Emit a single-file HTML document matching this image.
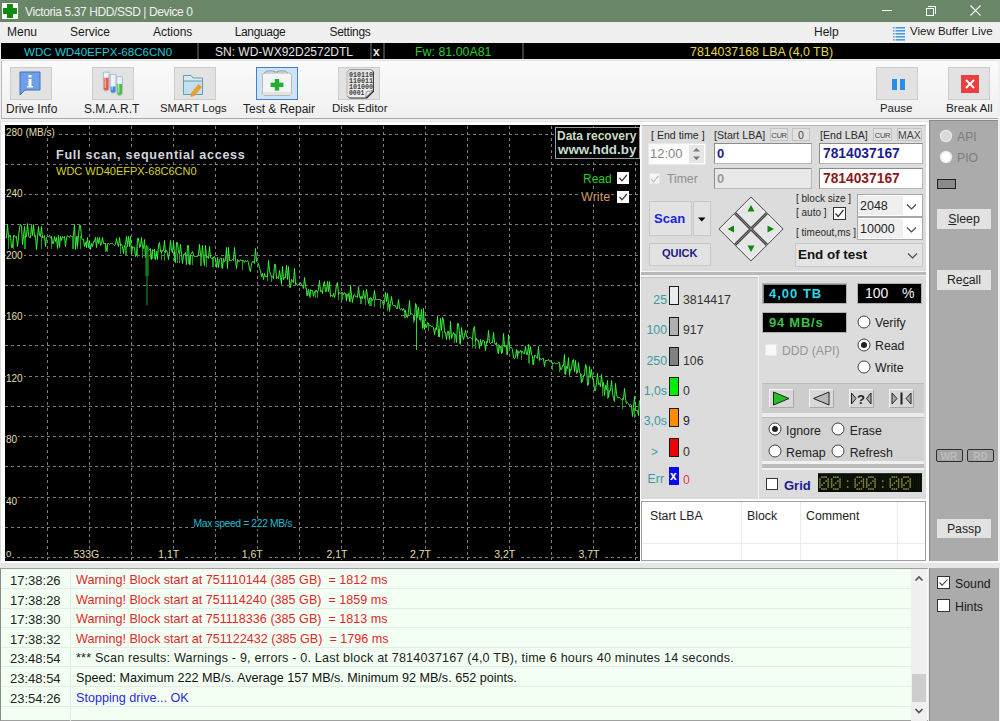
<!DOCTYPE html>
<html><head><meta charset="utf-8">
<style>
*{margin:0;padding:0;box-sizing:border-box}
html,body{width:1000px;height:721px;overflow:hidden;background:#f0f0f0;font-family:"Liberation Sans",sans-serif;font-size:12px;color:#000;position:relative}
.a{position:absolute}
.t{position:absolute;white-space:pre;line-height:1}
svg{position:absolute;left:0;top:0}
</style></head><body>

<div class="a" style="left:0px;top:0px;width:1000px;height:22px;background:#6a8669"></div>
<div class="a" style="left:2px;top:3px;width:16px;height:16px;background:#fff"></div>
<div class="a" style="left:7px;top:4px;width:6px;height:14px;background:#118a11"></div>
<div class="a" style="left:3px;top:8px;width:14px;height:6px;background:#118a11"></div>
<div class="t" style="left:25px;top:5.5px;font-size:12px;color:#eef2ee;font-weight:400;letter-spacing:-0.4px">Victoria 5.37 HDD/SSD | Device 0</div>
<div class="a" style="left:882px;top:10px;width:10px;height:1px;background:#fff"></div>
<div class="a" style="left:926px;top:8px;width:8px;height:8px;border:1px solid #fff"></div>
<div class="a" style="left:928px;top:6px;width:8px;height:8px;border-top:1px solid #fff;border-right:1px solid #fff"></div>
<svg width="1000" height="22" style="left:0;top:0"><path d="M970.5 5.5 L980.5 15.5 M980.5 5.5 L970.5 15.5" stroke="#fff" stroke-width="1.1"/></svg>
<div class="a" style="left:0px;top:22px;width:1000px;height:21px;background:#f0f0f0"></div>
<div class="t" style="left:7px;top:26px;font-size:12px;color:#1a1a1a;font-weight:400;letter-spacing:0px">Menu</div>
<div class="t" style="left:70px;top:26px;font-size:12px;color:#1a1a1a;font-weight:400;letter-spacing:0px">Service</div>
<div class="t" style="left:153px;top:26px;font-size:12px;color:#1a1a1a;font-weight:400;letter-spacing:0px">Actions</div>
<div class="t" style="left:234.7px;top:26px;font-size:12px;color:#1a1a1a;font-weight:400;letter-spacing:-0.35px">Language</div>
<div class="t" style="left:329.5px;top:26px;font-size:12px;color:#1a1a1a;font-weight:400;letter-spacing:-0.3px">Settings</div>
<div class="t" style="left:814px;top:26px;font-size:12px;color:#1a1a1a;font-weight:400;letter-spacing:0px">Help</div>
<div class="t" style="left:910px;top:26px;font-size:11.5px;color:#1a1a1a;font-weight:400;">View Buffer Live</div>
<svg width="16" height="16" style="left:892px;top:25px"><rect x="1" y="2" width="1.5" height="1.6" fill="#5aa8ec"/><rect x="3.5" y="2" width="9.5" height="1.6" fill="#4a9ce8"/><rect x="1" y="5" width="1.5" height="1.6" fill="#5aa8ec"/><rect x="3.5" y="5" width="9.5" height="1.6" fill="#4a9ce8"/><rect x="1" y="8" width="1.5" height="1.6" fill="#5aa8ec"/><rect x="3.5" y="8" width="9.5" height="1.6" fill="#4a9ce8"/><rect x="1" y="11" width="1.5" height="1.6" fill="#5aa8ec"/><rect x="3.5" y="11" width="9.5" height="1.6" fill="#4a9ce8"/><rect x="1" y="14" width="1.5" height="1.6" fill="#5aa8ec"/><rect x="3.5" y="14" width="9.5" height="1.6" fill="#4a9ce8"/></svg>
<div class="a" style="left:1px;top:43px;width:999px;height:16px;background:#000"></div>
<div class="a" style="left:197px;top:43px;width:2px;height:16px;background:#3c3c3c"></div>
<div class="a" style="left:370px;top:43px;width:2px;height:16px;background:#3c3c3c"></div>
<div class="a" style="left:383px;top:43px;width:2px;height:16px;background:#3c3c3c"></div>
<div class="a" style="left:522px;top:43px;width:2px;height:16px;background:#3c3c3c"></div>
<div class="t" style="left:24px;top:46px;font-size:11.6px;color:#20c8d4;font-weight:400;">WDC WD40EFPX-68C6CN0</div>
<div class="t" style="left:215px;top:46px;font-size:12px;color:#e4e4e4;font-weight:400;">SN: WD-WX92D2572DTL</div>
<div class="t" style="left:373px;top:45.5px;font-size:12px;color:#e4e4e4;font-weight:700;">x</div>
<div class="t" style="left:415px;top:46px;font-size:12.4px;color:#28d028;font-weight:400;">Fw: 81.00A81</div>
<div class="t" style="left:690px;top:46px;font-size:12.4px;color:#e2d84a;font-weight:400;">7814037168 LBA (4,0 TB)</div>
<div class="a" style="left:1px;top:60px;width:999px;height:59px;background:linear-gradient(#fbfbfb,#f0f0f0);border-left:1px solid #b8b8b8;border-top:1px solid #e2e2e2;border-bottom:1px solid #a8a8a8"></div>
<div class="a" style="left:10px;top:67px;width:42px;height:33px;background:#e2e2e2;border:1px solid #cdcdcd"></div>
<div class="t" style="left:6px;top:103px;font-size:12px;color:#222;font-weight:400;">Drive Info</div>
<div class="a" style="left:92px;top:67px;width:42px;height:33px;background:#e2e2e2;border:1px solid #cdcdcd"></div>
<div class="t" style="left:84px;top:103px;font-size:12px;color:#222;font-weight:400;">S.M.A.R.T</div>
<div class="a" style="left:174px;top:67px;width:42px;height:33px;background:#e2e2e2;border:1px solid #cdcdcd"></div>
<div class="t" style="left:160px;top:103px;font-size:11.3px;color:#222;font-weight:400;">SMART Logs</div>
<div class="a" style="left:256px;top:67px;width:42px;height:33px;background:#cfe2f6;border:1.6px solid #3d84d4"></div>
<div class="t" style="left:243px;top:103px;font-size:12px;color:#222;font-weight:400;">Test &amp; Repair</div>
<div class="a" style="left:338px;top:67px;width:42px;height:33px;background:#e2e2e2;border:1px solid #cdcdcd"></div>
<div class="t" style="left:332px;top:103px;font-size:11.5px;color:#222;font-weight:400;">Disk Editor</div>
<div class="a" style="left:876px;top:67px;width:42px;height:33px;background:#e2e2e2;border:1px solid #cdcdcd"></div>
<div class="t" style="left:880px;top:103px;font-size:11.4px;color:#222;font-weight:400;">Pause</div>
<div class="a" style="left:948px;top:67px;width:42px;height:33px;background:#e2e2e2;border:1px solid #cdcdcd"></div>
<div class="t" style="left:946px;top:103px;font-size:11.8px;color:#222;font-weight:400;">Break All</div>
<svg width="30" height="30" style="left:16px;top:70px"><path d="M4 2 H24 V20 H9 L4 25 Z" fill="#6f9fe8" stroke="#3f70c0" stroke-width="1"/><rect x="12.5" y="9" width="3" height="8" fill="#fff"/><rect x="12.5" y="5" width="3" height="2.5" fill="#fff"/><rect x="11" y="16" width="6" height="1.5" fill="#fff"/></svg>
<svg width="40" height="40" style="left:90px;top:64px"><path d="M13.4 8.2 H19.0 V24.2 A2.8 2.8 0 0 1 13.4 24.2 Z" fill="#e8f0f8" stroke="#9aa8b8" stroke-width="0.7"/><path d="M13.8 13.7 H18.6 V24.2 A2.4 2.4 0 0 1 13.8 24.2 Z" fill="#e85848"/><rect x="14.6" y="9.2" width="1.3" height="14.8" fill="#fff" opacity="0.55"/><path d="M20.3 10.3 H25.9 V26.4 A2.8 2.8 0 0 1 20.3 26.4 Z" fill="#e8f0f8" stroke="#9aa8b8" stroke-width="0.7"/><path d="M20.7 22.6 H25.5 V26.4 A2.4 2.4 0 0 1 20.7 26.4 Z" fill="#3a88d8"/><rect x="21.5" y="11.3" width="1.3" height="14.899999999999999" fill="#fff" opacity="0.55"/><path d="M26.8 12.6 H32.4 V28.8 A2.8 2.8 0 0 1 26.8 28.8 Z" fill="#e8f0f8" stroke="#9aa8b8" stroke-width="0.7"/><path d="M27.2 20 H32.0 V28.8 A2.4 2.4 0 0 1 27.2 28.8 Z" fill="#48c048"/><rect x="28.0" y="13.6" width="1.3" height="15.0" fill="#fff" opacity="0.55"/></svg>
<svg width="34" height="34" style="left:174px;top:67px"><path d="M9.5 8.5 H17 L19 11 H28.5 V27.5 H9.5 Z" fill="#dcebf2" stroke="#6a9cb4" stroke-width="1"/><path d="M9.5 14 H28.5 V27.5 H9.5 Z" fill="#c4e0ec" stroke="#6a9cb4" stroke-width="1"/><path d="M17.5 26 L24.5 17.5 L27.5 20 L20.5 28.5 L17 29.5 Z" fill="#f0a028" stroke="#d88818" stroke-width="0.5"/></svg>
<svg width="40" height="34" style="left:256px;top:67px"><path d="M8 6 L11 4 H18 V5 H22 V4 H29 L32 6" stroke="#888" stroke-width="0.8" fill="none"/><rect x="6.5" y="6" width="29" height="22.5" rx="2.5" fill="#f4f4f4" stroke="#b4b4b4" stroke-width="0.9"/><rect x="7" y="25" width="28" height="3" fill="#e2e2e2"/><rect x="18.8" y="12" width="4.4" height="11.6" fill="#22b030"/><rect x="14.6" y="15.6" width="12.8" height="4.4" fill="#22b030"/></svg>
<svg width="44" height="34" style="left:330px;top:67px"><defs><linearGradient id="pg" x1="0" y1="0" x2="1" y2="1"><stop offset="0" stop-color="#d8d8d8"/><stop offset="1" stop-color="#f8f8f8"/></linearGradient></defs><path d="M20 2.5 H42 L44.5 5 V24 L36.5 32 H20 L17.5 29.5 V5 Z" fill="#000" opacity="0"/><path d="M20 2.5 H41.5 L44 5 V24.5 L37 31.5 H19.5 L17 29 V5 Z" fill="#1a1a1a"/><path d="M19.5 2.5 H41 L43 4.5 V23.5 L36 30.5 H19 L17 28.5 V5 Z" fill="url(#pg)" stroke="#9a9a9a" stroke-width="0.6"/><text x="19" y="9.6" font-family="Liberation Mono" font-weight="700" font-size="7.6" fill="#3a3a3a" textLength="24" lengthAdjust="spacingAndGlyphs">010110</text><text x="19" y="15.8" font-family="Liberation Mono" font-weight="700" font-size="7.6" fill="#3a3a3a" textLength="24" lengthAdjust="spacingAndGlyphs">110011</text><text x="19" y="22.0" font-family="Liberation Mono" font-weight="700" font-size="7.6" fill="#3a3a3a" textLength="24" lengthAdjust="spacingAndGlyphs">101000</text><text x="19" y="28.2" font-family="Liberation Mono" font-weight="700" font-size="7.6" fill="#3a3a3a" textLength="15.5" lengthAdjust="spacingAndGlyphs">0001</text><path d="M35.5 30.5 L36.5 24.5 L43 23.5 Z" fill="#e8e8e8" stroke="#666" stroke-width="0.6"/></svg>
<div class="a" style="left:892px;top:79px;width:5px;height:11px;background:#2a8ee8"></div>
<div class="a" style="left:900px;top:79px;width:5px;height:11px;background:#2a8ee8"></div>
<div class="a" style="left:961px;top:75px;width:18px;height:18px;background:#e84040"></div>
<svg width="18" height="18" style="left:961px;top:75px"><path d="M5 5 L13 13 M13 5 L5 13" stroke="#fff" stroke-width="1.8"/></svg>
<div class="a" style="left:0px;top:121px;width:930px;height:441px;background:#fff;border-left:1px solid #d8d8d8;border-top:1px solid #e4e4e4"></div>
<div class="a" style="left:5px;top:125px;width:635px;height:436px;background:#000"></div>
<svg width="1000" height="721" style="left:0;top:0">
<path d="M47.5 126V560M89.5 126V560M131.5 126V560M173.5 126V560M215.5 126V560M257.5 126V560M299.5 126V560M341.5 126V560M383.5 126V560M425.5 126V560M467.5 126V560M509.5 126V560M551.5 126V560M593.5 126V560M635.5 126V560" stroke="#7c7c7c" stroke-width="1" stroke-dasharray="3 3" fill="none"/>
<path d="M5 134.5H640M5 164.5H640M5 194.5H640M5 224.5H640M5 255.5H640M5 285.5H640M5 315.5H640M5 345.5H640M5 376.5H640M5 406.5H640M5 436.5H640M5 466.5H640M5 497.5H640M5 527.5H640M5 557.5H640" stroke="#7c7c7c" stroke-width="1" stroke-dasharray="3 3" fill="none"/>
<path d="M8.5 236V249M13.5 236V249M24.5 236V249M25.5 236V249M41.5 236V249M51.5 236V249M72.5 236V249M73.5 236V249M77.5 236V249M80.5 236V249M86.5 241V248M105.5 243V252M107.5 243V252M120.5 245V254M125.5 245V255M126.5 246V255M137.5 247V257M142.5 248V258M150.5 249V259M152.5 249V259M154.5 249V259M161.5 250V260M164.5 251V261M174.5 252V262M177.5 253V263M179.5 253V263M188.5 254V264M190.5 255V265M192.5 255V265M200.5 256V266M201.5 256V266M206.5 257V267M212.5 257V267M213.5 257V267M221.5 258V268M242.5 260V270M267.5 275V281M271.5 276V282M281.5 278V285M289.5 280V288M306.5 288V296M310.5 290V298M315.5 290V298M317.5 291V298M338.5 293V300M341.5 293V300M342.5 293V300M346.5 294V301M350.5 295V302M360.5 296V304M361.5 297V304M365.5 297V305M369.5 298V306M370.5 298V306M371.5 298V306M374.5 299V307M380.5 300V308M387.5 303V311M389.5 304V312M404.5 310V318M405.5 310V318M413.5 315V323M423.5 320V328M428.5 323V331M438.5 329V337M439.5 329V337M442.5 331V339M454.5 334V343M459.5 335V344M460.5 335V345M472.5 338V348M475.5 339V349M498.5 344V354M501.5 345V354M506.5 346V355M517.5 350V359M521.5 351V360M528.5 354V363M529.5 355V364M532.5 356V365M552.5 362V370M559.5 364V372M564.5 366V374M569.5 368V377M581.5 374V383M602.5 386V396M607.5 389V399M622.5 399V409M634.5 408V418" stroke="#1a9c1a" stroke-width="1" fill="none" shape-rendering="crispEdges"/>
<path d="M5.5 237.5 6.5 237.5 7.5 224.5 8.5 237.5 9.5 235.5 10.5 235.5 11.5 247.5 12.5 247.5 13.5 235.5 14.5 235.5 15.5 237.5 16.5 236.5 17.5 246.5 18.5 237.5 19.5 227.5 20.5 224.5 21.5 225.5 22.5 244.5 23.5 236.5 24.5 226.5 25.5 237.5 26.5 236.5 27.5 223.5 28.5 235.5 29.5 237.5 30.5 237.5 31.5 225.5 32.5 235.5 33.5 224.5 34.5 236.5 35.5 235.5 36.5 249.5 37.5 237.5 38.5 226.5 39.5 235.5 40.5 236.5 41.5 226.5 42.5 237.5 43.5 237.5 44.5 235.5 45.5 246.5 46.5 237.5 47.5 236.5 48.5 236.5 49.5 235.5 50.5 237.5 51.5 236.5 52.5 243.5 53.5 243.5 54.5 236.5 55.5 241.5 56.5 237.5 57.5 248.5 58.5 235.5 59.5 247.5 60.5 236.5 61.5 240.5 62.5 236.5 63.5 237.5 64.5 236.5 65.5 246.5 66.5 237.5 67.5 235.5 68.5 236.5 69.5 237.5 70.5 235.5 71.5 236.5 72.5 236.5 73.5 235.5 74.5 224.5 75.5 249.5 76.5 236.5 77.5 246.5 78.5 235.5 79.5 225.5 80.5 225.5 81.5 237.5 82.5 239.5 83.5 239.5 84.5 246.5 85.5 242.5 86.5 247.5 87.5 237.5 88.5 247.5 89.5 241.5 90.5 249.5 91.5 243.5 92.5 246.5 93.5 241.5 94.5 241.5 95.5 237.5 96.5 247.5 97.5 237.5 98.5 243.5 99.5 237.5 100.5 245.5 101.5 243.5 102.5 237.5 103.5 243.5 104.5 243.5 105.5 243.5 106.5 250.5 107.5 244.5 108.5 243.5 109.5 244.5 110.5 243.5 111.5 243.5 112.5 243.5 113.5 244.5 114.5 245.5 115.5 244.5 116.5 238.5 117.5 243.5 118.5 246.5 119.5 237.5 120.5 245.5 121.5 244.5 122.5 246.5 123.5 253.5 124.5 245.5 125.5 244.5 126.5 236.5 127.5 246.5 128.5 236.5 129.5 246.5 130.5 236.5 131.5 254.5 132.5 246.5 133.5 247.5 134.5 247.5 135.5 256.5 136.5 255.5 137.5 238.5 138.5 238.5 139.5 247.5 140.5 246.5 141.5 237.5 142.5 247.5 143.5 248.5 144.5 239.5 145.5 257.5 146.5 245.5 147.5 249.5 148.5 250.5 149.5 249.5 150.5 248.5 151.5 259.5 152.5 250.5 153.5 250.5 154.5 249.5 155.5 259.5 156.5 251.5 157.5 259.5 158.5 244.5 159.5 242.5 160.5 251.5 161.5 252.5 162.5 250.5 163.5 250.5 164.5 240.5 165.5 252.5 166.5 250.5 167.5 252.5 168.5 259.5 169.5 251.5 170.5 240.5 171.5 250.5 172.5 252.5 173.5 241.5 174.5 254.5 175.5 262.5 176.5 242.5 177.5 242.5 178.5 252.5 179.5 253.5 180.5 244.5 181.5 254.5 182.5 263.5 183.5 254.5 184.5 254.5 185.5 252.5 186.5 264.5 187.5 245.5 188.5 245.5 189.5 264.5 190.5 254.5 191.5 253.5 192.5 251.5 193.5 254.5 194.5 256.5 195.5 256.5 196.5 256.5 197.5 256.5 198.5 255.5 199.5 244.5 200.5 255.5 201.5 256.5 202.5 245.5 203.5 258.5 204.5 265.5 205.5 245.5 206.5 257.5 207.5 256.5 208.5 258.5 209.5 246.5 210.5 257.5 211.5 258.5 212.5 258.5 213.5 257.5 214.5 256.5 215.5 259.5 216.5 267.5 217.5 257.5 218.5 267.5 219.5 259.5 220.5 258.5 221.5 258.5 222.5 268.5 223.5 258.5 224.5 261.5 225.5 260.5 226.5 247.5 227.5 268.5 228.5 247.5 229.5 260.5 230.5 260.5 231.5 260.5 232.5 259.5 233.5 260.5 234.5 247.5 235.5 260.5 236.5 268.5 237.5 259.5 238.5 261.5 239.5 261.5 240.5 259.5 241.5 260.5 242.5 260.5 243.5 260.5 244.5 262.5 245.5 260.5 246.5 261.5 247.5 260.5 248.5 262.5 249.5 269.5 250.5 271.5 251.5 263.5 252.5 261.5 253.5 261.5 254.5 263.5 255.5 248.5 256.5 261.5 257.5 262.5 258.5 263.5 259.5 268.5 260.5 270.5 261.5 276.5 262.5 273.5 263.5 279.5 264.5 273.5 265.5 276.5 266.5 276.5 267.5 276.5 268.5 260.5 269.5 270.5 270.5 274.5 271.5 276.5 272.5 276.5 273.5 278.5 274.5 264.5 275.5 264.5 276.5 278.5 277.5 277.5 278.5 278.5 279.5 270.5 280.5 277.5 281.5 283.5 282.5 266.5 283.5 279.5 284.5 277.5 285.5 277.5 286.5 265.5 287.5 279.5 288.5 266.5 289.5 280.5 290.5 287.5 291.5 279.5 292.5 281.5 293.5 282.5 294.5 268.5 295.5 284.5 296.5 283.5 297.5 285.5 298.5 284.5 299.5 284.5 300.5 282.5 301.5 284.5 302.5 285.5 303.5 288.5 304.5 277.5 305.5 286.5 306.5 289.5 307.5 295.5 308.5 289.5 309.5 296.5 310.5 289.5 311.5 290.5 312.5 290.5 313.5 296.5 314.5 291.5 315.5 291.5 316.5 290.5 317.5 292.5 318.5 289.5 319.5 280.5 320.5 291.5 321.5 290.5 322.5 293.5 323.5 283.5 324.5 281.5 325.5 291.5 326.5 291.5 327.5 281.5 328.5 291.5 329.5 281.5 330.5 296.5 331.5 295.5 332.5 296.5 333.5 293.5 334.5 297.5 335.5 292.5 336.5 284.5 337.5 282.5 338.5 294.5 339.5 292.5 340.5 293.5 341.5 292.5 342.5 292.5 343.5 294.5 344.5 292.5 345.5 293.5 346.5 300.5 347.5 294.5 348.5 293.5 349.5 301.5 350.5 285.5 351.5 295.5 352.5 302.5 353.5 295.5 354.5 294.5 355.5 296.5 356.5 296.5 357.5 297.5 358.5 286.5 359.5 296.5 360.5 298.5 361.5 296.5 362.5 298.5 363.5 290.5 364.5 298.5 365.5 297.5 366.5 289.5 367.5 296.5 368.5 303.5 369.5 298.5 370.5 297.5 371.5 298.5 372.5 300.5 373.5 298.5 374.5 290.5 375.5 299.5 376.5 299.5 377.5 299.5 378.5 299.5 379.5 299.5 380.5 299.5 381.5 300.5 382.5 301.5 383.5 305.5 384.5 302.5 385.5 292.5 386.5 301.5 387.5 293.5 388.5 304.5 389.5 310.5 390.5 303.5 391.5 296.5 392.5 304.5 393.5 305.5 394.5 305.5 395.5 305.5 396.5 308.5 397.5 308.5 398.5 299.5 399.5 308.5 400.5 309.5 401.5 308.5 402.5 310.5 403.5 308.5 404.5 311.5 405.5 310.5 406.5 316.5 407.5 317.5 408.5 312.5 409.5 300.5 410.5 314.5 411.5 313.5 412.5 314.5 413.5 315.5 414.5 320.5 415.5 303.5 416.5 305.5 417.5 317.5 418.5 307.5 419.5 319.5 420.5 320.5 421.5 309.5 422.5 328.5 423.5 308.5 424.5 329.5 425.5 324.5 426.5 327.5 427.5 322.5 428.5 323.5 429.5 325.5 430.5 325.5 431.5 326.5 432.5 326.5 433.5 327.5 434.5 334.5 435.5 328.5 436.5 329.5 437.5 316.5 438.5 336.5 439.5 336.5 440.5 318.5 441.5 330.5 442.5 317.5 443.5 319.5 444.5 332.5 445.5 332.5 446.5 339.5 447.5 331.5 448.5 331.5 449.5 339.5 450.5 321.5 451.5 338.5 452.5 335.5 453.5 332.5 454.5 334.5 455.5 334.5 456.5 342.5 457.5 323.5 458.5 323.5 459.5 334.5 460.5 343.5 461.5 327.5 462.5 335.5 463.5 339.5 464.5 335.5 465.5 330.5 466.5 336.5 467.5 337.5 468.5 338.5 469.5 337.5 470.5 337.5 471.5 338.5 472.5 339.5 473.5 328.5 474.5 326.5 475.5 341.5 476.5 338.5 477.5 340.5 478.5 340.5 479.5 348.5 480.5 339.5 481.5 345.5 482.5 340.5 483.5 340.5 484.5 341.5 485.5 350.5 486.5 341.5 487.5 342.5 488.5 330.5 489.5 342.5 490.5 343.5 491.5 342.5 492.5 342.5 493.5 332.5 494.5 342.5 495.5 344.5 496.5 342.5 497.5 350.5 498.5 353.5 499.5 345.5 500.5 346.5 501.5 353.5 502.5 352.5 503.5 333.5 504.5 346.5 505.5 346.5 506.5 345.5 507.5 354.5 508.5 334.5 509.5 347.5 510.5 347.5 511.5 347.5 512.5 349.5 513.5 357.5 514.5 358.5 515.5 357.5 516.5 349.5 517.5 356.5 518.5 351.5 519.5 352.5 520.5 350.5 521.5 352.5 522.5 351.5 523.5 353.5 524.5 353.5 525.5 346.5 526.5 354.5 527.5 354.5 528.5 344.5 529.5 354.5 530.5 346.5 531.5 354.5 532.5 356.5 533.5 364.5 534.5 355.5 535.5 355.5 536.5 357.5 537.5 358.5 538.5 346.5 539.5 360.5 540.5 358.5 541.5 359.5 542.5 358.5 543.5 358.5 544.5 366.5 545.5 360.5 546.5 360.5 547.5 360.5 548.5 359.5 549.5 361.5 550.5 360.5 551.5 362.5 552.5 363.5 553.5 363.5 554.5 362.5 555.5 363.5 556.5 363.5 557.5 363.5 558.5 362.5 559.5 362.5 560.5 369.5 561.5 369.5 562.5 365.5 563.5 365.5 564.5 354.5 565.5 374.5 566.5 366.5 567.5 368.5 568.5 357.5 569.5 374.5 570.5 369.5 571.5 369.5 572.5 360.5 573.5 359.5 574.5 371.5 575.5 360.5 576.5 373.5 577.5 372.5 578.5 362.5 579.5 372.5 580.5 373.5 581.5 382.5 582.5 381.5 583.5 375.5 584.5 375.5 585.5 364.5 586.5 366.5 587.5 385.5 588.5 384.5 589.5 366.5 590.5 377.5 591.5 369.5 592.5 378.5 593.5 380.5 594.5 390.5 595.5 390.5 596.5 382.5 597.5 373.5 598.5 384.5 599.5 383.5 600.5 386.5 601.5 374.5 602.5 386.5 603.5 382.5 604.5 395.5 605.5 385.5 606.5 389.5 607.5 380.5 608.5 397.5 609.5 390.5 610.5 390.5 611.5 380.5 612.5 392.5 613.5 398.5 614.5 401.5 615.5 383.5 616.5 394.5 617.5 397.5 618.5 397.5 619.5 397.5 620.5 398.5 621.5 399.5 622.5 398.5 623.5 399.5 624.5 388.5 625.5 398.5 626.5 403.5 627.5 402.5 628.5 403.5 629.5 405.5 630.5 404.5 631.5 405.5 632.5 416.5 633.5 407.5 634.5 396.5 635.5 409.5 636.5 410.5 637.5 410.5 638.5 415.5 639.5 400.5" stroke="#3cf23c" stroke-width="1" fill="none"/>
<path d="M147 246 V305 M146 246 V276 M148 246 V276" stroke="#1fa01f" stroke-width="1"/>
<path d="M416.5 310 V350" stroke="#2fd02f" stroke-width="1"/>
</svg>
<div class="t" style="left:6px;top:127.8px;font-size:10px;color:#e2dcae;font-weight:400;background:#000;padding-right:1px">280 (MB/s)</div>
<div class="t" style="left:6px;top:189.3px;font-size:10px;color:#e2dcae;font-weight:400;background:#000;padding-right:1px">240</div>
<div class="t" style="left:6px;top:250.8px;font-size:10px;color:#e2dcae;font-weight:400;background:#000;padding-right:1px">200</div>
<div class="t" style="left:6px;top:312.3px;font-size:10px;color:#e2dcae;font-weight:400;background:#000;padding-right:1px">160</div>
<div class="t" style="left:6px;top:373.8px;font-size:10px;color:#e2dcae;font-weight:400;background:#000;padding-right:1px">120</div>
<div class="t" style="left:6px;top:435.3px;font-size:10px;color:#e2dcae;font-weight:400;background:#000;padding-right:1px">80</div>
<div class="t" style="left:6px;top:496.8px;font-size:10px;color:#e2dcae;font-weight:400;background:#000;padding-right:1px">40</div>
<div class="t" style="left:6px;top:548.9px;font-size:9.5px;color:#e2dcae;font-weight:400;background:#000;padding-right:1px">0</div>
<div class="t" style="left:72.3px;top:548.6px;width:28px;text-align:center;font-size:10.5px;color:#e2dcae;background:#000">533G</div>
<div class="t" style="left:154.7px;top:548.6px;width:28px;text-align:center;font-size:10.5px;color:#e2dcae;background:#000">1,1T</div>
<div class="t" style="left:238.2px;top:548.6px;width:28px;text-align:center;font-size:10.5px;color:#e2dcae;background:#000">1,6T</div>
<div class="t" style="left:322.9px;top:548.6px;width:28px;text-align:center;font-size:10.5px;color:#e2dcae;background:#000">2,1T</div>
<div class="t" style="left:406.4px;top:548.6px;width:28px;text-align:center;font-size:10.5px;color:#e2dcae;background:#000">2,7T</div>
<div class="t" style="left:490.7px;top:548.6px;width:28px;text-align:center;font-size:10.5px;color:#e2dcae;background:#000">3,2T</div>
<div class="t" style="left:574.9px;top:548.6px;width:28px;text-align:center;font-size:10.5px;color:#e2dcae;background:#000">3,7T</div>
<div class="t" style="left:56px;top:149px;font-size:12.6px;color:#d2d6de;font-weight:700;background:#000;letter-spacing:0.72px">Full scan, sequential access</div>
<div class="t" style="left:56px;top:166px;font-size:11px;color:#d8d028;font-weight:400;background:#000">WDC WD40EFPX-68C6CN0</div>
<div class="t" style="left:193.5px;top:518.6px;font-size:10.4px;color:#22bccc;font-weight:400;background:#000;letter-spacing:-0.4px">Max speed = 222 MB/s</div>
<div class="a" style="left:555px;top:127px;width:85px;height:32px;border:1px solid #9a9a9a;background:#000"></div>
<div class="t" style="left:557px;top:130px;font-size:12px;color:#c8dcc0;font-weight:700;">Data recovery</div>
<div class="t" style="left:558px;top:143px;font-size:13.4px;color:#c4dccc;font-weight:700;">www.hdd.by</div>
<div class="t" style="left:583px;top:173px;font-size:12px;color:#22d022;font-weight:400;background:#000">Read</div>
<div class="t" style="left:581px;top:191px;font-size:12.6px;color:#d09a68;font-weight:400;background:#000">Write</div>
<div class="a" style="left:617px;top:172px;width:12px;height:12px;background:#fff"></div>
<svg width="12" height="12" style="left:617px;top:172px"><path d="M2.5 6 L5 8.8 L9.8 3" stroke="#333" stroke-width="1.2" fill="none"/></svg>
<div class="a" style="left:617px;top:191px;width:12px;height:12px;background:#fff"></div>
<svg width="12" height="12" style="left:617px;top:191px"><path d="M2.5 6 L5 8.8 L9.8 3" stroke="#333" stroke-width="1.2" fill="none"/></svg>
<div class="a" style="left:641px;top:125px;width:285px;height:147px;background:#dcdcdc;border-top:1px solid #b4b4b4;border-left:1px solid #f4f4f4"></div>
<div class="a" style="left:641px;top:271px;width:285px;height:1px;background:#f4f4f4"></div>
<div class="a" style="left:641px;top:272px;width:285px;height:3px;background:#b8b8b8"></div>
<div class="a" style="left:641px;top:275px;width:285px;height:2px;background:#f0f0f0"></div>
<div class="a" style="left:641px;top:277px;width:117px;height:222px;background:#dcdcdc;border-top:1px solid #c4c4c4"></div>
<div class="a" style="left:758px;top:276px;width:1px;height:223px;background:#f6f6f6"></div>
<div class="a" style="left:759px;top:276px;width:167px;height:223px;background:#dcdcdc"></div>
<div class="t" style="left:651px;top:130px;font-size:10.6px;color:#2a2a2a;font-weight:400;">[ End time ]</div>
<div class="t" style="left:714px;top:130px;font-size:10.6px;color:#2a2a2a;font-weight:400;">[Start LBA]</div>
<div class="t" style="left:820px;top:130px;font-size:10.6px;color:#2a2a2a;font-weight:400;">[End LBA]</div>
<div class="a" style="left:770px;top:128px;width:18px;height:13px;background:#e2e2e2;border:1px solid #c2c2c2"></div>
<div class="t" style="left:770px;top:131.5px;width:18px;text-align:center;font-size:7.6px;color:#444;letter-spacing:-0.3px">CUR</div>
<div class="a" style="left:792px;top:128px;width:18px;height:13px;background:#e2e2e2;border:1px solid #c2c2c2"></div>
<div class="t" style="left:792px;top:130px;width:18px;text-align:center;font-size:10.5px;color:#444;letter-spacing:0px">0</div>
<div class="a" style="left:873px;top:128px;width:19px;height:13px;background:#e2e2e2;border:1px solid #c2c2c2"></div>
<div class="t" style="left:873px;top:131.5px;width:19px;text-align:center;font-size:7.6px;color:#444;letter-spacing:-0.3px">CUR</div>
<div class="a" style="left:897px;top:128px;width:25px;height:13px;background:#e2e2e2;border:1px solid #c2c2c2"></div>
<div class="t" style="left:897px;top:130px;width:25px;text-align:center;font-size:10.5px;color:#444;letter-spacing:0px">MAX</div>
<div class="a" style="left:648px;top:143px;width:58px;height:22px;background:#fcfcfc;border:1px solid #e8e8e8"></div>
<div class="t" style="left:650px;top:147px;font-size:13px;color:#888;font-weight:400;">12:00</div>
<div class="a" style="left:689px;top:145px;width:15px;height:18px;background:#e6e6e6"></div>
<svg width="14" height="18" style="left:689px;top:145px"><path d="M4 6.5 L7.5 3 L11 6.5 Z M4 11.5 L7.5 15 L11 11.5 Z" fill="#777"/></svg>
<div class="a" style="left:714px;top:143px;width:98px;height:21px;background:#fff;border:1px solid #8c8c8c;border-right-color:#b8b8b8;border-bottom-color:#b8b8b8"></div>
<div class="t" style="left:717px;top:147px;font-size:13px;color:#1e2090;font-weight:700;">0</div>
<div class="a" style="left:714px;top:168px;width:98px;height:21px;background:#e8e8e8;border:1px solid #8c8c8c;border-right-color:#b8b8b8;border-bottom-color:#b8b8b8"></div>
<div class="t" style="left:717px;top:172px;font-size:13px;color:#9a9a9a;font-weight:700;">0</div>
<div class="a" style="left:819px;top:143px;width:104px;height:21px;background:#fff;border:1px solid #8c8c8c;border-right-color:#b8b8b8;border-bottom-color:#b8b8b8"></div>
<div class="t" style="left:823px;top:146.5px;font-size:13.8px;color:#1e2090;font-weight:700;">7814037167</div>
<div class="a" style="left:819px;top:168px;width:104px;height:21px;background:#fff;border:1px solid #8c8c8c;border-right-color:#b8b8b8;border-bottom-color:#b8b8b8"></div>
<div class="t" style="left:823px;top:171.5px;font-size:13.8px;color:#8c1a1a;font-weight:700;">7814037167</div>
<div class="a" style="left:649px;top:173px;width:11px;height:11px;background:#f6f6f6;border:1px solid #e6e6e6"></div>
<svg width="12" height="12" style="left:649px;top:173px"><path d="M2 6 L4.5 8.8 L9.5 2.8" stroke="#bdbdbd" stroke-width="1.2" fill="none"/></svg>
<div class="t" style="left:667px;top:173px;font-size:12.2px;color:#8e8e8e;font-weight:400;">Timer</div>
<div class="a" style="left:649px;top:201px;width:43px;height:35px;background:#e2e2e2;border:1px solid #c8c8c8"></div>
<div class="t" style="left:654px;top:212px;font-size:13px;color:#2020d8;font-weight:700;">Scan</div>
<div class="a" style="left:693px;top:201px;width:18px;height:35px;background:#e2e2e2;border:1px solid #c8c8c8"></div>
<svg width="18" height="35" style="left:693px;top:201px"><path d="M5 16.5 L12.5 16.5 L8.75 20.5 Z" fill="#000"/></svg>
<div class="a" style="left:649px;top:243px;width:62px;height:23px;background:#e2e2e2;border:1px solid #c8c8c8"></div>
<div class="t" style="left:662px;top:248px;font-size:11px;color:#1a1a80;font-weight:700;">QUICK</div>
<svg width="80" height="80" style="left:710.5px;top:189px">
<g transform="translate(40 40) rotate(45)">
<rect x="-22.5" y="-22.5" width="45" height="45" fill="#e6e6e6" stroke="#5c5c5c" stroke-width="1.1"/>
<path d="M-22 0H22M0 -22V22" stroke="#4a4a4a" stroke-width="3"/>
<path d="M-22 0H22M0 -22V22" stroke="#8a8a8a" stroke-width="0.8"/>
<path d="M-21.5 -2 V-21.5 H-2 M2 -21.5 H21.5 V-2 M-21.5 2 V21.5 H-2 M2 21.5 H21.5 V2" stroke="#fafafa" stroke-width="1" fill="none"/>
</g>
<path d="M40 16 L43.5 22.5 L36.5 22.5 Z" fill="#0c880c"/>
<path d="M40 63 L43.5 56.5 L36.5 56.5 Z" fill="#0c880c"/>
<path d="M16.5 40 L23 36.5 L23 43.5 Z" fill="#0c880c"/>
<path d="M63 40 L56.5 36.5 L56.5 43.5 Z" fill="#0c880c"/>
</svg>
<div class="t" style="left:796px;top:194px;font-size:10px;color:#2a2a2a;font-weight:400;">[ block size ]</div>
<div class="t" style="left:796px;top:208px;font-size:10px;color:#2a2a2a;font-weight:400;">[ auto ]</div>
<div class="t" style="left:796px;top:228px;font-size:10px;color:#2a2a2a;font-weight:400;">[ timeout,ms ]</div>
<div class="a" style="left:833px;top:207px;width:13px;height:13px;background:#fff;border:1px solid #333"></div>
<svg width="13" height="13" style="left:833px;top:207px"><path d="M2.5 6.5 L5.2 9.5 L10.5 3" stroke="#333" stroke-width="1.2" fill="none"/></svg>
<div class="a" style="left:857px;top:194px;width:66px;height:23px;background:#fff;border:1px solid #a8a8a8"></div>
<div class="a" style="left:858px;top:196px;width:45px;height:19px;background:#efefef"></div>
<div class="t" style="left:860px;top:199.5px;font-size:12.5px;color:#222;font-weight:400;">2048</div>
<svg width="14" height="10" style="left:905px;top:202px"><path d="M2 2.5 L6.5 7 L11 2.5" stroke="#444" stroke-width="1.1" fill="none"/></svg>
<div class="a" style="left:857px;top:217px;width:66px;height:23px;background:#fff;border:1px solid #a8a8a8"></div>
<div class="a" style="left:858px;top:219px;width:45px;height:19px;background:#efefef"></div>
<div class="t" style="left:860px;top:222.5px;font-size:12.5px;color:#222;font-weight:400;">10000</div>
<svg width="14" height="10" style="left:905px;top:225px"><path d="M2 2.5 L6.5 7 L11 2.5" stroke="#444" stroke-width="1.1" fill="none"/></svg>
<div class="a" style="left:795px;top:243px;width:128px;height:24px;background:#e4e4e4;border:1px solid #c8c8c8"></div>
<div class="t" style="left:798px;top:248px;font-size:13.4px;color:#111;font-weight:700;">End of test</div>
<svg width="14" height="10" style="left:906px;top:251px"><path d="M2 2.5 L6.5 7 L11 2.5" stroke="#444" stroke-width="1.1" fill="none"/></svg>
<div class="a" style="left:669px;top:286px;width:10px;height:19px;background:#ececec;border:1px solid #1a1a1a"></div>
<div class="t" style="left:630px;top:293.8px;width:37px;text-align:right;font-size:12.3px;color:#3a9a9e">25</div>
<div class="t" style="left:683px;top:293.8px;font-size:12.3px;color:#333;font-weight:400;">3814417</div>
<div class="a" style="left:669px;top:316.5px;width:10px;height:19px;background:#b0b0b0;border:1px solid #1a1a1a"></div>
<div class="t" style="left:630px;top:324.3px;width:37px;text-align:right;font-size:12.3px;color:#3a9a9e">100</div>
<div class="t" style="left:683px;top:324.3px;font-size:12.3px;color:#333;font-weight:400;">917</div>
<div class="a" style="left:669px;top:347px;width:10px;height:19px;background:#808080;border:1px solid #1a1a1a"></div>
<div class="t" style="left:630px;top:354.8px;width:37px;text-align:right;font-size:12.3px;color:#3a9a9e">250</div>
<div class="t" style="left:683px;top:354.8px;font-size:12.3px;color:#333;font-weight:400;">106</div>
<div class="a" style="left:669px;top:377.3px;width:10px;height:19px;background:#00ee00;border:1px solid #1a1a1a"></div>
<div class="t" style="left:630px;top:385.1px;width:37px;text-align:right;font-size:12.3px;color:#3a9a9e">1,0s</div>
<div class="t" style="left:683px;top:385.1px;font-size:12.3px;color:#333;font-weight:400;">0</div>
<div class="a" style="left:669px;top:407.5px;width:10px;height:19px;background:#ff8c00;border:1px solid #1a1a1a"></div>
<div class="t" style="left:630px;top:415.3px;width:37px;text-align:right;font-size:12.3px;color:#3a9a9e">3,0s</div>
<div class="t" style="left:683px;top:415.3px;font-size:12.3px;color:#222;font-weight:400;">9</div>
<div class="a" style="left:669px;top:438px;width:10px;height:19px;background:#ee0000;border:1px solid #1a1a1a"></div>
<div class="t" style="left:651px;top:445.8px;font-size:12px;color:#4aa0a0;font-weight:400;">&gt;</div>
<div class="t" style="left:683px;top:445.8px;font-size:12.3px;color:#333;font-weight:400;">0</div>
<div class="a" style="left:669px;top:467px;width:10px;height:18px;background:#0a0af0"></div>
<div class="t" style="left:670px;top:470px;font-size:12px;color:#fff;font-weight:700;">x</div>
<div class="t" style="left:627px;top:472.5px;width:37px;text-align:right;font-size:12.3px;color:#3a9a9e">Err</div>
<div class="t" style="left:683px;top:473.5px;font-size:12.3px;color:#e43c3c;font-weight:400;">0</div>
<div class="a" style="left:762px;top:283px;width:85px;height:21px;background:#000;border:1px solid #b0b0b0;box-shadow:inset 1px 1px 0 #888"></div>
<div class="t" style="left:769px;top:286.5px;font-size:13px;color:#28d8e8;font-weight:700;letter-spacing:1px">4,00 TB</div>
<div class="a" style="left:857px;top:283px;width:65px;height:21px;background:#000;border:1px solid #b0b0b0"></div>
<div class="t" style="left:865px;top:286px;font-size:14px;color:#f4f4f4;font-weight:400;">100</div>
<div class="t" style="left:902px;top:286px;font-size:14px;color:#f4f4f4;font-weight:400;">%</div>
<div class="a" style="left:762px;top:312px;width:85px;height:21px;background:#000;border:1px solid #b0b0b0"></div>
<div class="t" style="left:769px;top:315.5px;font-size:13px;color:#38c048;font-weight:700;letter-spacing:0.75px">94 MB/s</div>
<div class="a" style="left:765px;top:344px;width:12px;height:12px;background:#f8f8f8;border:1px solid #e8e8e8"></div>
<div class="t" style="left:782px;top:345px;font-size:12.2px;color:#959595;font-weight:400;">DDD (API)</div>
<svg width="16" height="16" style="left:856px;top:314px"><circle cx="8" cy="8" r="6" fill="#fff" stroke="#444" stroke-width="1"/></svg>
<div class="t" style="left:875px;top:317px;font-size:12.3px;color:#222;font-weight:400;">Verify</div>
<svg width="16" height="16" style="left:856px;top:336.7px"><circle cx="8" cy="8" r="6" fill="#fff" stroke="#444" stroke-width="1"/><circle cx="8" cy="8" r="3" fill="#222"/></svg>
<div class="t" style="left:875px;top:339.7px;font-size:12.3px;color:#222;font-weight:400;">Read</div>
<svg width="16" height="16" style="left:856px;top:359px"><circle cx="8" cy="8" r="6" fill="#fff" stroke="#444" stroke-width="1"/></svg>
<div class="t" style="left:875px;top:362px;font-size:12.3px;color:#222;font-weight:400;">Write</div>
<div class="a" style="left:762px;top:383px;width:162px;height:30px;background:#cdcdcd;border-top:1px solid #bcbcbc"></div>
<div class="a" style="left:769px;top:389px;width:25px;height:19px;background:#d8d8d8;border:1px solid #f4f4f4;border-right-color:#aaa;border-bottom-color:#aaa"></div>
<div class="a" style="left:809px;top:389px;width:25px;height:19px;background:#d8d8d8;border:1px solid #f4f4f4;border-right-color:#aaa;border-bottom-color:#aaa"></div>
<div class="a" style="left:849px;top:389px;width:25px;height:19px;background:#d8d8d8;border:1px solid #f4f4f4;border-right-color:#aaa;border-bottom-color:#aaa"></div>
<div class="a" style="left:889px;top:389px;width:25px;height:19px;background:#d8d8d8;border:1px solid #f4f4f4;border-right-color:#aaa;border-bottom-color:#aaa"></div>
<svg width="25" height="19" style="left:769px;top:389px"><path d="M4.5 3 L20 9.5 L4.5 16 Z" fill="#22c022" stroke="#222" stroke-width="1"/></svg>
<svg width="25" height="19" style="left:809px;top:389px"><path d="M20 3 L4.5 9.5 L20 16 Z" fill="#b8b8b8" stroke="#222" stroke-width="1"/></svg>
<svg width="25" height="19" style="left:849px;top:389px"><path d="M2.5 4 L7 9.5 L2.5 15 Z M22 4 L17.5 9.5 L22 15 Z" fill="#aaa" stroke="#222" stroke-width="1"/><text x="8" y="15" font-family="Liberation Sans" font-weight="700" font-size="13" fill="#222">?</text></svg>
<svg width="25" height="19" style="left:889px;top:389px"><path d="M3 4 L8 9.5 L3 15 Z M22 4 L17 9.5 L22 15 Z" fill="#aaa" stroke="#222" stroke-width="1"/><rect x="11.5" y="3.5" width="2" height="12" fill="#222"/></svg>
<div class="a" style="left:762px;top:413px;width:162px;height:4px;background:#ececec"></div>
<div class="a" style="left:762px;top:417px;width:162px;height:44px;background:#d2d2d2;border-top:1px solid #bcbcbc"></div>
<svg width="16" height="16" style="left:766.5px;top:421.3px"><circle cx="8" cy="8" r="6" fill="#fff" stroke="#444" stroke-width="1"/><circle cx="8" cy="8" r="3" fill="#222"/></svg>
<div class="t" style="left:786.0px;top:424.8px;font-size:12.3px;color:#222;font-weight:400;">Ignore</div>
<svg width="16" height="16" style="left:830.2px;top:421.3px"><circle cx="8" cy="8" r="6" fill="#fff" stroke="#444" stroke-width="1"/></svg>
<div class="t" style="left:849.7px;top:424.8px;font-size:12.3px;color:#222;font-weight:400;">Erase</div>
<svg width="16" height="16" style="left:766.5px;top:443.2px"><circle cx="8" cy="8" r="6" fill="#fff" stroke="#444" stroke-width="1"/></svg>
<div class="t" style="left:786.0px;top:446.7px;font-size:12.3px;color:#222;font-weight:400;">Remap</div>
<svg width="16" height="16" style="left:830.2px;top:443.2px"><circle cx="8" cy="8" r="6" fill="#fff" stroke="#444" stroke-width="1"/></svg>
<div class="t" style="left:849.7px;top:446.7px;font-size:12.3px;color:#222;font-weight:400;">Refresh</div>
<div class="a" style="left:762px;top:461px;width:162px;height:3px;background:#f0f0f0"></div>
<div class="a" style="left:762px;top:464px;width:162px;height:4px;background:#bcbcbc"></div>
<div class="a" style="left:762px;top:468px;width:162px;height:2px;background:#f0f0f0"></div>
<div class="a" style="left:766px;top:478px;width:12px;height:12px;background:#fff;border:1px solid #333"></div>
<div class="t" style="left:784px;top:479px;font-size:13px;color:#1a1a90;font-weight:700;">Grid</div>
<div class="a" style="left:818px;top:473px;width:104px;height:19px;background:#070c06;border-top:1px solid #333"></div>
<svg width="104" height="19" style="left:818px;top:473px"><rect x="1.20" y="2" width="0.9" height="15" fill="#0e1c0c"/><rect x="3.28" y="2" width="0.9" height="15" fill="#0e1c0c"/><rect x="5.36" y="2" width="0.9" height="15" fill="#0e1c0c"/><rect x="7.44" y="2" width="0.9" height="15" fill="#0e1c0c"/><rect x="9.52" y="2" width="0.9" height="15" fill="#0e1c0c"/><rect x="11.60" y="2" width="0.9" height="15" fill="#0e1c0c"/><rect x="13.68" y="2" width="0.9" height="15" fill="#0e1c0c"/><rect x="15.76" y="2" width="0.9" height="15" fill="#0e1c0c"/><rect x="17.84" y="2" width="0.9" height="15" fill="#0e1c0c"/><rect x="19.92" y="2" width="0.9" height="15" fill="#0e1c0c"/><rect x="22.00" y="2" width="0.9" height="15" fill="#0e1c0c"/><rect x="24.08" y="2" width="0.9" height="15" fill="#0e1c0c"/><rect x="26.16" y="2" width="0.9" height="15" fill="#0e1c0c"/><rect x="28.24" y="2" width="0.9" height="15" fill="#0e1c0c"/><rect x="30.32" y="2" width="0.9" height="15" fill="#0e1c0c"/><rect x="32.40" y="2" width="0.9" height="15" fill="#0e1c0c"/><rect x="34.48" y="2" width="0.9" height="15" fill="#0e1c0c"/><rect x="36.56" y="2" width="0.9" height="15" fill="#0e1c0c"/><rect x="38.64" y="2" width="0.9" height="15" fill="#0e1c0c"/><rect x="40.72" y="2" width="0.9" height="15" fill="#0e1c0c"/><rect x="42.80" y="2" width="0.9" height="15" fill="#0e1c0c"/><rect x="44.88" y="2" width="0.9" height="15" fill="#0e1c0c"/><rect x="46.96" y="2" width="0.9" height="15" fill="#0e1c0c"/><rect x="49.04" y="2" width="0.9" height="15" fill="#0e1c0c"/><rect x="51.12" y="2" width="0.9" height="15" fill="#0e1c0c"/><rect x="53.20" y="2" width="0.9" height="15" fill="#0e1c0c"/><rect x="55.28" y="2" width="0.9" height="15" fill="#0e1c0c"/><rect x="57.36" y="2" width="0.9" height="15" fill="#0e1c0c"/><rect x="59.44" y="2" width="0.9" height="15" fill="#0e1c0c"/><rect x="61.52" y="2" width="0.9" height="15" fill="#0e1c0c"/><rect x="63.60" y="2" width="0.9" height="15" fill="#0e1c0c"/><rect x="65.68" y="2" width="0.9" height="15" fill="#0e1c0c"/><rect x="67.76" y="2" width="0.9" height="15" fill="#0e1c0c"/><rect x="69.84" y="2" width="0.9" height="15" fill="#0e1c0c"/><rect x="71.92" y="2" width="0.9" height="15" fill="#0e1c0c"/><rect x="74.00" y="2" width="0.9" height="15" fill="#0e1c0c"/><rect x="76.08" y="2" width="0.9" height="15" fill="#0e1c0c"/><rect x="78.16" y="2" width="0.9" height="15" fill="#0e1c0c"/><rect x="80.24" y="2" width="0.9" height="15" fill="#0e1c0c"/><rect x="82.32" y="2" width="0.9" height="15" fill="#0e1c0c"/><rect x="84.40" y="2" width="0.9" height="15" fill="#0e1c0c"/><rect x="86.48" y="2" width="0.9" height="15" fill="#0e1c0c"/><rect x="88.56" y="2" width="0.9" height="15" fill="#0e1c0c"/><rect x="90.64" y="2" width="0.9" height="15" fill="#0e1c0c"/><rect x="92.72" y="2" width="0.9" height="15" fill="#0e1c0c"/><rect x="94.80" y="2" width="0.9" height="15" fill="#0e1c0c"/><rect x="96.88" y="2" width="0.9" height="15" fill="#0e1c0c"/><rect x="98.96" y="2" width="0.9" height="15" fill="#0e1c0c"/><rect x="101.04" y="2" width="0.9" height="15" fill="#0e1c0c"/><rect x="103.12" y="2" width="0.9" height="15" fill="#0e1c0c"/><rect x="3.18" y="3.40" width="1.5" height="1.5" fill="#9a9438"/><rect x="5.26" y="3.40" width="1.5" height="1.5" fill="#9a9438"/><rect x="7.34" y="3.40" width="1.5" height="1.5" fill="#9a9438"/><rect x="1.10" y="5.38" width="1.5" height="1.5" fill="#9a9438"/><rect x="9.42" y="5.38" width="1.5" height="1.5" fill="#9a9438"/><rect x="1.10" y="7.36" width="1.5" height="1.5" fill="#9a9438"/><rect x="7.34" y="7.36" width="1.5" height="1.5" fill="#9a9438"/><rect x="9.42" y="7.36" width="1.5" height="1.5" fill="#9a9438"/><rect x="1.10" y="9.34" width="1.5" height="1.5" fill="#9a9438"/><rect x="5.26" y="9.34" width="1.5" height="1.5" fill="#9a9438"/><rect x="9.42" y="9.34" width="1.5" height="1.5" fill="#9a9438"/><rect x="1.10" y="11.32" width="1.5" height="1.5" fill="#9a9438"/><rect x="3.18" y="11.32" width="1.5" height="1.5" fill="#9a9438"/><rect x="9.42" y="11.32" width="1.5" height="1.5" fill="#9a9438"/><rect x="1.10" y="13.30" width="1.5" height="1.5" fill="#9a9438"/><rect x="9.42" y="13.30" width="1.5" height="1.5" fill="#9a9438"/><rect x="3.18" y="15.28" width="1.5" height="1.5" fill="#9a9438"/><rect x="5.26" y="15.28" width="1.5" height="1.5" fill="#9a9438"/><rect x="7.34" y="15.28" width="1.5" height="1.5" fill="#9a9438"/><rect x="14.98" y="3.40" width="1.5" height="1.5" fill="#9a9438"/><rect x="17.06" y="3.40" width="1.5" height="1.5" fill="#9a9438"/><rect x="19.14" y="3.40" width="1.5" height="1.5" fill="#9a9438"/><rect x="12.90" y="5.38" width="1.5" height="1.5" fill="#9a9438"/><rect x="21.22" y="5.38" width="1.5" height="1.5" fill="#9a9438"/><rect x="12.90" y="7.36" width="1.5" height="1.5" fill="#9a9438"/><rect x="19.14" y="7.36" width="1.5" height="1.5" fill="#9a9438"/><rect x="21.22" y="7.36" width="1.5" height="1.5" fill="#9a9438"/><rect x="12.90" y="9.34" width="1.5" height="1.5" fill="#9a9438"/><rect x="17.06" y="9.34" width="1.5" height="1.5" fill="#9a9438"/><rect x="21.22" y="9.34" width="1.5" height="1.5" fill="#9a9438"/><rect x="12.90" y="11.32" width="1.5" height="1.5" fill="#9a9438"/><rect x="14.98" y="11.32" width="1.5" height="1.5" fill="#9a9438"/><rect x="21.22" y="11.32" width="1.5" height="1.5" fill="#9a9438"/><rect x="12.90" y="13.30" width="1.5" height="1.5" fill="#9a9438"/><rect x="21.22" y="13.30" width="1.5" height="1.5" fill="#9a9438"/><rect x="14.98" y="15.28" width="1.5" height="1.5" fill="#9a9438"/><rect x="17.06" y="15.28" width="1.5" height="1.5" fill="#9a9438"/><rect x="19.14" y="15.28" width="1.5" height="1.5" fill="#9a9438"/><rect x="38.48" y="3.40" width="1.5" height="1.5" fill="#9a9438"/><rect x="40.56" y="3.40" width="1.5" height="1.5" fill="#9a9438"/><rect x="42.64" y="3.40" width="1.5" height="1.5" fill="#9a9438"/><rect x="36.40" y="5.38" width="1.5" height="1.5" fill="#9a9438"/><rect x="44.72" y="5.38" width="1.5" height="1.5" fill="#9a9438"/><rect x="36.40" y="7.36" width="1.5" height="1.5" fill="#9a9438"/><rect x="42.64" y="7.36" width="1.5" height="1.5" fill="#9a9438"/><rect x="44.72" y="7.36" width="1.5" height="1.5" fill="#9a9438"/><rect x="36.40" y="9.34" width="1.5" height="1.5" fill="#9a9438"/><rect x="40.56" y="9.34" width="1.5" height="1.5" fill="#9a9438"/><rect x="44.72" y="9.34" width="1.5" height="1.5" fill="#9a9438"/><rect x="36.40" y="11.32" width="1.5" height="1.5" fill="#9a9438"/><rect x="38.48" y="11.32" width="1.5" height="1.5" fill="#9a9438"/><rect x="44.72" y="11.32" width="1.5" height="1.5" fill="#9a9438"/><rect x="36.40" y="13.30" width="1.5" height="1.5" fill="#9a9438"/><rect x="44.72" y="13.30" width="1.5" height="1.5" fill="#9a9438"/><rect x="38.48" y="15.28" width="1.5" height="1.5" fill="#9a9438"/><rect x="40.56" y="15.28" width="1.5" height="1.5" fill="#9a9438"/><rect x="42.64" y="15.28" width="1.5" height="1.5" fill="#9a9438"/><rect x="50.08" y="3.40" width="1.5" height="1.5" fill="#9a9438"/><rect x="52.16" y="3.40" width="1.5" height="1.5" fill="#9a9438"/><rect x="54.24" y="3.40" width="1.5" height="1.5" fill="#9a9438"/><rect x="48.00" y="5.38" width="1.5" height="1.5" fill="#9a9438"/><rect x="56.32" y="5.38" width="1.5" height="1.5" fill="#9a9438"/><rect x="48.00" y="7.36" width="1.5" height="1.5" fill="#9a9438"/><rect x="54.24" y="7.36" width="1.5" height="1.5" fill="#9a9438"/><rect x="56.32" y="7.36" width="1.5" height="1.5" fill="#9a9438"/><rect x="48.00" y="9.34" width="1.5" height="1.5" fill="#9a9438"/><rect x="52.16" y="9.34" width="1.5" height="1.5" fill="#9a9438"/><rect x="56.32" y="9.34" width="1.5" height="1.5" fill="#9a9438"/><rect x="48.00" y="11.32" width="1.5" height="1.5" fill="#9a9438"/><rect x="50.08" y="11.32" width="1.5" height="1.5" fill="#9a9438"/><rect x="56.32" y="11.32" width="1.5" height="1.5" fill="#9a9438"/><rect x="48.00" y="13.30" width="1.5" height="1.5" fill="#9a9438"/><rect x="56.32" y="13.30" width="1.5" height="1.5" fill="#9a9438"/><rect x="50.08" y="15.28" width="1.5" height="1.5" fill="#9a9438"/><rect x="52.16" y="15.28" width="1.5" height="1.5" fill="#9a9438"/><rect x="54.24" y="15.28" width="1.5" height="1.5" fill="#9a9438"/><rect x="73.58" y="3.40" width="1.5" height="1.5" fill="#9a9438"/><rect x="75.66" y="3.40" width="1.5" height="1.5" fill="#9a9438"/><rect x="77.74" y="3.40" width="1.5" height="1.5" fill="#9a9438"/><rect x="71.50" y="5.38" width="1.5" height="1.5" fill="#9a9438"/><rect x="79.82" y="5.38" width="1.5" height="1.5" fill="#9a9438"/><rect x="71.50" y="7.36" width="1.5" height="1.5" fill="#9a9438"/><rect x="77.74" y="7.36" width="1.5" height="1.5" fill="#9a9438"/><rect x="79.82" y="7.36" width="1.5" height="1.5" fill="#9a9438"/><rect x="71.50" y="9.34" width="1.5" height="1.5" fill="#9a9438"/><rect x="75.66" y="9.34" width="1.5" height="1.5" fill="#9a9438"/><rect x="79.82" y="9.34" width="1.5" height="1.5" fill="#9a9438"/><rect x="71.50" y="11.32" width="1.5" height="1.5" fill="#9a9438"/><rect x="73.58" y="11.32" width="1.5" height="1.5" fill="#9a9438"/><rect x="79.82" y="11.32" width="1.5" height="1.5" fill="#9a9438"/><rect x="71.50" y="13.30" width="1.5" height="1.5" fill="#9a9438"/><rect x="79.82" y="13.30" width="1.5" height="1.5" fill="#9a9438"/><rect x="73.58" y="15.28" width="1.5" height="1.5" fill="#9a9438"/><rect x="75.66" y="15.28" width="1.5" height="1.5" fill="#9a9438"/><rect x="77.74" y="15.28" width="1.5" height="1.5" fill="#9a9438"/><rect x="85.18" y="3.40" width="1.5" height="1.5" fill="#9a9438"/><rect x="87.26" y="3.40" width="1.5" height="1.5" fill="#9a9438"/><rect x="89.34" y="3.40" width="1.5" height="1.5" fill="#9a9438"/><rect x="83.10" y="5.38" width="1.5" height="1.5" fill="#9a9438"/><rect x="91.42" y="5.38" width="1.5" height="1.5" fill="#9a9438"/><rect x="83.10" y="7.36" width="1.5" height="1.5" fill="#9a9438"/><rect x="89.34" y="7.36" width="1.5" height="1.5" fill="#9a9438"/><rect x="91.42" y="7.36" width="1.5" height="1.5" fill="#9a9438"/><rect x="83.10" y="9.34" width="1.5" height="1.5" fill="#9a9438"/><rect x="87.26" y="9.34" width="1.5" height="1.5" fill="#9a9438"/><rect x="91.42" y="9.34" width="1.5" height="1.5" fill="#9a9438"/><rect x="83.10" y="11.32" width="1.5" height="1.5" fill="#9a9438"/><rect x="85.18" y="11.32" width="1.5" height="1.5" fill="#9a9438"/><rect x="91.42" y="11.32" width="1.5" height="1.5" fill="#9a9438"/><rect x="83.10" y="13.30" width="1.5" height="1.5" fill="#9a9438"/><rect x="91.42" y="13.30" width="1.5" height="1.5" fill="#9a9438"/><rect x="85.18" y="15.28" width="1.5" height="1.5" fill="#9a9438"/><rect x="87.26" y="15.28" width="1.5" height="1.5" fill="#9a9438"/><rect x="89.34" y="15.28" width="1.5" height="1.5" fill="#9a9438"/><rect x="28.90" y="7.36" width="1.5" height="1.5" fill="#9a9438"/><rect x="28.90" y="13.30" width="1.5" height="1.5" fill="#9a9438"/><rect x="64.00" y="7.36" width="1.5" height="1.5" fill="#9a9438"/><rect x="64.00" y="13.30" width="1.5" height="1.5" fill="#9a9438"/></svg>
<div class="a" style="left:641px;top:501px;width:285px;height:60px;background:#fff;border:1px solid #a0a0a0"></div>
<div class="a" style="left:741px;top:502px;width:1px;height:58px;background:#ececec"></div>
<div class="a" style="left:800px;top:502px;width:1px;height:58px;background:#ececec"></div>
<div class="a" style="left:897px;top:502px;width:1px;height:58px;background:#ececec"></div>
<div class="a" style="left:642px;top:543px;width:283px;height:1px;background:#ececec"></div>
<div class="t" style="left:650px;top:510px;font-size:12.3px;color:#222;font-weight:400;">Start LBA</div>
<div class="t" style="left:747px;top:510px;font-size:12.3px;color:#222;font-weight:400;">Block</div>
<div class="t" style="left:806px;top:510px;font-size:12.3px;color:#222;font-weight:400;">Comment</div>
<div class="a" style="left:929px;top:120px;width:70px;height:443px;background:#ababab;border-left:1px solid #8a8a8a;border-top:1px solid #8a8a8a"></div>
<div class="a" style="left:998px;top:60px;width:2px;height:661px;background:#f0f0f0"></div>
<svg width="16" height="16" style="left:938px;top:127.6px"><circle cx="8" cy="8" r="5.5" fill="#d8d8d8" stroke="#e8e8e8" stroke-width="1.4"/></svg>
<div class="t" style="left:957px;top:130.6px;font-size:12.2px;color:#7c7c7c;font-weight:400;">API</div>
<svg width="16" height="16" style="left:938px;top:148.9px"><circle cx="8" cy="8" r="5.5" fill="#fff" stroke="#e8e8e8" stroke-width="1.4"/></svg>
<div class="t" style="left:957px;top:151.9px;font-size:12.2px;color:#7c7c7c;font-weight:400;">PIO</div>
<div class="a" style="left:937px;top:179px;width:19px;height:10px;background:#8a8a8a;border:1px solid #222"></div>
<div class="a" style="left:937px;top:209px;width:54px;height:20px;background:#e2e2e2"></div>
<div class="t" style="left:937px;top:213px;width:54px;text-align:center;font-size:12.3px;color:#222"><u>S</u>leep</div>
<div class="a" style="left:937px;top:270px;width:54px;height:20px;background:#e2e2e2"></div>
<div class="t" style="left:937px;top:274px;width:54px;text-align:center;font-size:12.3px;color:#222">Re<u>c</u>all</div>
<div class="a" style="left:937px;top:519px;width:54px;height:19px;background:#e2e2e2"></div>
<div class="t" style="left:937px;top:523px;width:54px;text-align:center;font-size:12.3px;color:#222">Passp</div>
<div class="a" style="left:935.5px;top:449px;width:27px;height:13px;background:#a4a4a4;border:1.5px solid #2e2e2e;border-radius:2px"></div>
<div class="t" style="left:935.5px;top:451.5px;width:27px;text-align:center;font-size:10px;font-weight:700;color:#bcbcbc">WR</div>
<div class="a" style="left:967px;top:449px;width:27px;height:13px;background:#a4a4a4;border:1.5px solid #2e2e2e;border-radius:2px"></div>
<div class="t" style="left:967px;top:451.5px;width:27px;text-align:center;font-size:10px;font-weight:700;color:#bcbcbc">RD</div>
<div class="a" style="left:0px;top:561px;width:1000px;height:7px;background:#e6e6e6;border-top:2px solid #fafafa"></div>
<div class="a" style="left:929px;top:568px;width:70px;height:153px;background:#ababab;border-left:1px solid #8a8a8a"></div>
<div class="a" style="left:937px;top:576px;width:13px;height:13px;background:#fff;border:1px solid #333"></div>
<svg width="13" height="13" style="left:937px;top:576px"><path d="M2.5 6.5 L5.2 9.2 L10.5 3.5" stroke="#444" stroke-width="1.1" fill="none"/></svg>
<div class="t" style="left:955px;top:577.5px;font-size:12.3px;color:#1a1a1a;font-weight:400;">Sound</div>
<div class="a" style="left:937px;top:599px;width:13px;height:13px;background:#fff;border:1px solid #333"></div>
<div class="t" style="left:955px;top:600.5px;font-size:12.3px;color:#1a1a1a;font-weight:400;">Hints</div>
<div class="a" style="left:0px;top:568px;width:928px;height:153px;background:#f4fff4;border:1px solid #a0a0a0;border-left-color:#8a8a8a;border-right:none"></div>
<div class="a" style="left:1px;top:588px;width:910px;height:1px;background:#e4ede4"></div>
<div class="a" style="left:1px;top:608px;width:910px;height:1px;background:#e4ede4"></div>
<div class="a" style="left:1px;top:627px;width:910px;height:1px;background:#e4ede4"></div>
<div class="a" style="left:1px;top:647px;width:910px;height:1px;background:#e4ede4"></div>
<div class="a" style="left:1px;top:666px;width:910px;height:1px;background:#e4ede4"></div>
<div class="a" style="left:1px;top:686px;width:910px;height:1px;background:#e4ede4"></div>
<div class="a" style="left:1px;top:706px;width:910px;height:1px;background:#e4ede4"></div>
<div class="a" style="left:1px;top:725px;width:910px;height:1px;background:#e4ede4"></div>
<div class="a" style="left:70px;top:569px;width:1px;height:152px;background:#e4ede4"></div>
<div class="t" style="left:10px;top:574px;font-size:13px;color:#222;font-weight:400;">17:38:26</div>
<div class="t" style="left:76px;top:574px;font-size:12.6px;color:#e02828;font-weight:400;">Warning! Block start at 751110144 (385 GB)  = 1812 ms</div>
<div class="t" style="left:10px;top:594px;font-size:13px;color:#222;font-weight:400;">17:38:28</div>
<div class="t" style="left:76px;top:594px;font-size:12.6px;color:#e02828;font-weight:400;">Warning! Block start at 751114240 (385 GB)  = 1859 ms</div>
<div class="t" style="left:10px;top:613px;font-size:13px;color:#222;font-weight:400;">17:38:30</div>
<div class="t" style="left:76px;top:613px;font-size:12.6px;color:#e02828;font-weight:400;">Warning! Block start at 751118336 (385 GB)  = 1813 ms</div>
<div class="t" style="left:10px;top:633px;font-size:13px;color:#222;font-weight:400;">17:38:32</div>
<div class="t" style="left:76px;top:633px;font-size:12.6px;color:#e02828;font-weight:400;">Warning! Block start at 751122432 (385 GB)  = 1796 ms</div>
<div class="t" style="left:10px;top:652px;font-size:13px;color:#222;font-weight:400;">23:48:54</div>
<div class="t" style="left:76px;top:652px;font-size:12.6px;color:#222;font-weight:400;letter-spacing:0.19px">*** Scan results: Warnings - 9, errors - 0. Last block at 7814037167 (4,0 TB), time 6 hours 40 minutes 14 seconds.</div>
<div class="t" style="left:10px;top:672px;font-size:13px;color:#222;font-weight:400;">23:48:54</div>
<div class="t" style="left:76px;top:672px;font-size:12.6px;color:#111;font-weight:400;">Speed: Maximum 222 MB/s. Average 157 MB/s. Minimum 92 MB/s. 652 points.</div>
<div class="t" style="left:10px;top:692px;font-size:13px;color:#222;font-weight:400;">23:54:26</div>
<div class="t" style="left:76px;top:692px;font-size:12.6px;color:#2a2ae0;font-weight:400;">Stopping drive... OK</div>
<div class="a" style="left:911px;top:569px;width:16px;height:152px;background:#f0f0f0"></div>
<div class="a" style="left:912px;top:674px;width:14px;height:28px;background:#cdcdcd"></div>
<svg width="16" height="12" style="left:911px;top:573px"><path d="M4.5 7.5 L8 4 L11.5 7.5" stroke="#555" stroke-width="1.7" fill="none"/></svg>
<svg width="16" height="12" style="left:911px;top:705px"><path d="M4.5 4 L8 7.5 L11.5 4" stroke="#555" stroke-width="1.7" fill="none"/></svg>
</body></html>
